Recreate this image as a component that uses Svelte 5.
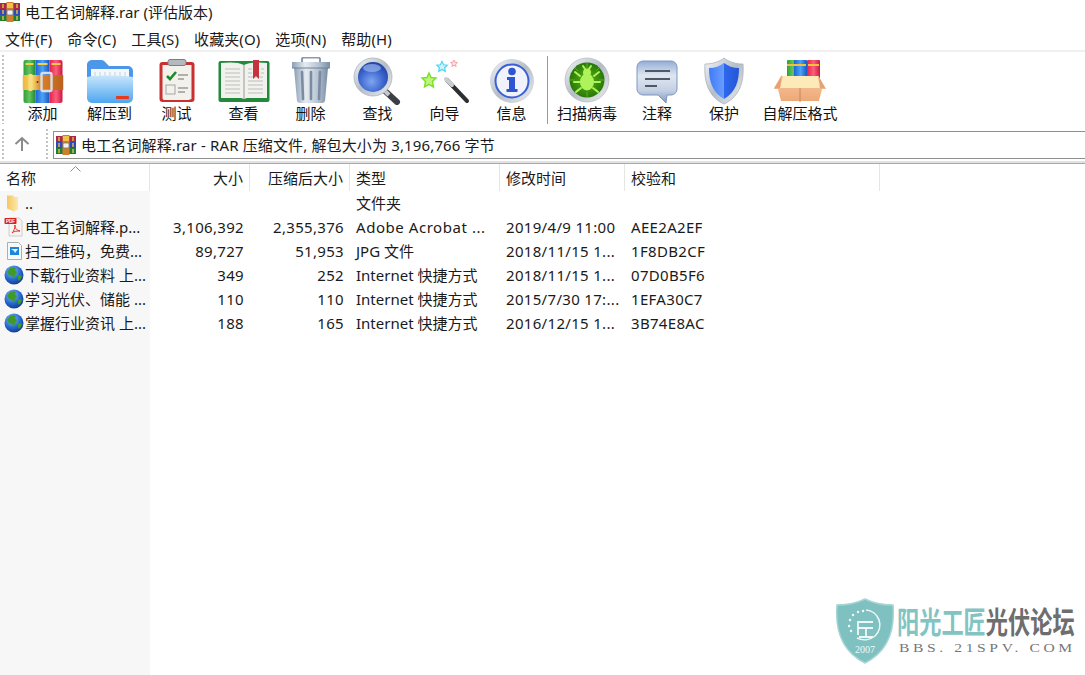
<script>
  const tools1 = [
    { label: '添加', w: 67, icon: 'rar' },
    { label: '解压到', w: 67, icon: 'folder' },
    { label: '测试', w: 67, icon: 'test' },
    { label: '查看', w: 67, icon: 'book' },
    { label: '删除', w: 67, icon: 'trash' },
    { label: '查找', w: 67, icon: 'find' },
    { label: '向导', w: 67, icon: 'wand' },
    { label: '信息', w: 67, icon: 'info' }
  ];
  const tools2 = [
    { label: '扫描病毒', w: 78, icon: 'bug' },
    { label: '注释', w: 62, icon: 'note' },
    { label: '保护', w: 72, icon: 'shield' },
    { label: '自解压格式', w: 80, icon: 'box' }
  ];
  const menus = ['文件(F)', '命令(C)', '工具(S)', '收藏夹(O)', '选项(N)', '帮助(H)'];
  const rows = [
    { icon: 'dir', name: '..', size: '', packed: '', type: '文件夹', time: '', crc: '' },
    { icon: 'pdf', name: '电工名词解释.p...', size: '3,106,392', packed: '2,355,376', type: 'Adobe Acrobat ...', wide: true, time: '2019/4/9 11:00', crc: 'AEE2A2EF' },
    { icon: 'jpg', name: '扫二维码，免费...', size: '89,727', packed: '51,953', type: 'JPG 文件', time: '2018/11/15 1...', crc: '1F8DB2CF' },
    { icon: 'web', name: '下载行业资料 上...', size: '349', packed: '252', type: 'Internet 快捷方式', time: '2018/11/15 1...', crc: '07D0B5F6' },
    { icon: 'web', name: '学习光伏、储能 ...', size: '110', packed: '110', type: 'Internet 快捷方式', time: '2015/7/30 17:...', crc: '1EFA30C7' },
    { icon: 'web', name: '掌握行业资讯 上...', size: '188', packed: '165', type: 'Internet 快捷方式', time: '2016/12/15 1...', crc: '3B74E8AC' }
  ];
</script>

<svg class="defs" width="0" height="0" aria-hidden="true">
  <defs>
    <linearGradient id="gGreen" x1="0" x2="1" y1="0" y2="0"><stop offset="0" stop-color="#2f9e3f"/><stop offset=".5" stop-color="#63c45a"/><stop offset="1" stop-color="#23873a"/></linearGradient>
    <linearGradient id="gBlue" x1="0" x2="1" y1="0" y2="0"><stop offset="0" stop-color="#1d63d6"/><stop offset=".5" stop-color="#4aa3f5"/><stop offset="1" stop-color="#1a55c4"/></linearGradient>
    <linearGradient id="gRed" x1="0" x2="1" y1="0" y2="0"><stop offset="0" stop-color="#e3204a"/><stop offset=".5" stop-color="#fb5f7c"/><stop offset="1" stop-color="#c91840"/></linearGradient>
    <linearGradient id="gBelt" x1="0" x2="1" y1="0" y2="0"><stop offset="0" stop-color="#e8b93c"/><stop offset=".25" stop-color="#f5d469"/><stop offset=".45" stop-color="#d9822b"/><stop offset="1" stop-color="#b9601c"/></linearGradient>
    <linearGradient id="gFolder" x1="0" x2="0" y1="0" y2="1"><stop offset="0" stop-color="#c9e6fb"/><stop offset="1" stop-color="#4da6ef"/></linearGradient>
    <linearGradient id="gMetal" x1="0" x2="1" y1="0" y2="0"><stop offset="0" stop-color="#8c9fb6"/><stop offset=".35" stop-color="#e6ebf1"/><stop offset=".7" stop-color="#b6c3d2"/><stop offset="1" stop-color="#7a8da4"/></linearGradient>
    <linearGradient id="gRing" x1="0" x2="1" y1="0" y2="1"><stop offset="0" stop-color="#f4f6f8"/><stop offset=".5" stop-color="#b4bcc6"/><stop offset="1" stop-color="#eef0f3"/></linearGradient>
    <radialGradient id="gLens" cx=".45" cy=".65" r=".7"><stop offset="0" stop-color="#7fa6f2"/><stop offset=".6" stop-color="#3a63cc"/><stop offset="1" stop-color="#1d3c9c"/></radialGradient>
    <radialGradient id="gBug" cx=".5" cy=".5" r=".55"><stop offset="0" stop-color="#5cb514"/><stop offset="1" stop-color="#237306"/></radialGradient>
    <linearGradient id="gNote" x1="0" x2="0" y1="0" y2="1"><stop offset="0" stop-color="#93add6"/><stop offset=".35" stop-color="#dfe6f0"/><stop offset=".7" stop-color="#c4d1e4"/><stop offset="1" stop-color="#7f99c0"/></linearGradient>
    <linearGradient id="gShield" x1="0" x2="1" y1="0" y2="0"><stop offset="0" stop-color="#3f7cfa"/><stop offset=".5" stop-color="#6a9dfd"/><stop offset=".5" stop-color="#2f68ee"/><stop offset="1" stop-color="#2356d6"/></linearGradient>
    <linearGradient id="gBox" x1="0" x2="0" y1="0" y2="1"><stop offset="0" stop-color="#f6c79b"/><stop offset="1" stop-color="#eea878"/></linearGradient>
    <radialGradient id="gGlobe" cx=".4" cy=".3" r=".8"><stop offset="0" stop-color="#8cc0f5"/><stop offset=".55" stop-color="#2469d0"/><stop offset="1" stop-color="#0d2f78"/></radialGradient>
    <linearGradient id="gDir" x1="0" x2="1" y1="0" y2="0"><stop offset="0" stop-color="#f3c85f"/><stop offset="1" stop-color="#fde9ad"/></linearGradient>

    <symbol id="rarIcon" viewBox="0 0 41 43">
      <path d="M1 2a2 2 0 0 1 2-2h10v43H3a2 2 0 0 1-2-2z" fill="url(#gGreen)"/>
      <rect x="13" y="0" width="14" height="43" fill="url(#gBlue)"/>
      <path d="M27 0h11a2 2 0 0 1 2 2v39a2 2 0 0 1-2 2H27z" fill="url(#gRed)"/>
      <rect x="3" y="3" width="8" height="2" fill="#f4d04a"/><rect x="15" y="3" width="10" height="2" fill="#f4d04a"/><rect x="29" y="3" width="9" height="2" fill="#f4c84a"/>
      <rect x="0" y="15" width="41" height="15" fill="url(#gBelt)"/>
      <rect x="6" y="14" width="4" height="17" rx="1" fill="#f7dd83"/>
      <rect x="19" y="13" width="10" height="18" rx="1.5" fill="none" stroke="#d9dde2" stroke-width="2.4"/>
      <circle cx="15" cy="22" r="1" fill="#5a3510"/>
    </symbol>

    <symbol id="rarSmall" viewBox="0 0 20 20">
      <rect x="0" y="1" width="20" height="6" fill="#a62a45"/>
      <rect x="0" y="7" width="20" height="6" fill="#3048b6"/>
      <rect x="0" y="13" width="20" height="6" fill="#1f7d38"/>
      <path d="M3 2v4M17 2v4M3 8v4M17 8v4M3 14v4M17 14v4" stroke="#e5c244" stroke-width="1.400"/>
      <rect x="6.500" y="0" width="7" height="20" fill="#d0802a"/>
      <rect x="7" y="1" width="6" height="5" fill="#f0c04a"/>
      <rect x="7" y="8" width="6" height="5" rx="1" fill="#f2f2f2" stroke="#777" stroke-width=".8"/>
    </symbol>

    <symbol id="globeIcon" viewBox="0 0 20 20">
      <circle cx="10" cy="10" r="9.500" fill="url(#gGlobe)"/>
      <path d="M6 3c2-1 5-1 6 0l-1 2 2 2-2 3-1 4-2-3-3-1-2-3zM14 11l3-1 1 2-3 4-1-2z" fill="#3f9a2c"/>
    </symbol>
  </defs>
</svg>

{#snippet icon(name)}
  <svg class="tool-icon" width="52" height="48" viewBox="0 0 52 48" aria-hidden="true">
    {#if name === 'rar'}
      <use href="#rarIcon" x="5.500" y="3" width="41" height="43"/>
    {:else if name === 'folder'}
      <path d="M3 9a5 5 0 0 1 5-6h9c3 0 4 2 6 4l2 2h19a5 5 0 0 1 5 5v8H3z" fill="#4c97ea"/>
      <path d="M7 12h38v18H7z" fill="#f3f8fd"/>
      <path d="M11 15v6M16 15v6M21 15v6M26 15v6M31 15v6M36 15v6M41 15v6" stroke="#c3d2e0" stroke-width="1"/>
      <path d="M3 20c8-2 36-2 46 0v21a5 5 0 0 1-5 5H8a5 5 0 0 1-5-5z" fill="url(#gFolder)"/>
      <rect x="32" y="39" width="13" height="3" rx=".8" fill="#e8391d"/>
    {:else if name === 'test'}
      <rect x="8.500" y="5" width="35" height="40" rx="3" fill="#c9302f"/>
      <path d="M11.500 8h29v34l-3 1H13a2 2 0 0 1-1.500-2z" fill="#f2f1ec"/>
      <rect x="17" y="2.500" width="18" height="6" rx="2" fill="#b5b8bd" stroke="#7c7f85"/>
      <path d="M16 19l3 3 6-7" fill="none" stroke="#1f8a2c" stroke-width="2.600"/>
      <path d="M27 18h10M27 22h6M27 31h10M27 35h7" stroke="#9a9a9a" stroke-width="1.500"/>
      <rect x="15" y="28" width="9" height="9" fill="none" stroke="#a5a5a5"/>
    {:else if name === 'book'}
      <rect x="0.500" y="4" width="51" height="41" rx="2" fill="#238a3b"/>
      <path d="M3 6c8-1 18-1 23 2 5-3 15-3 23-2v35H29l-3 1-3-1H3z" fill="#f1f1ee"/>
      <path d="M26 8v34" stroke="#b6b6b6" stroke-width="1.500"/>
      <path d="M7 12h15M7 16h15M7 20h15M7 24h15M7 28h15M7 32h15M7 36h15M30 20h15M30 24h15M30 28h15M30 32h15M30 36h15M30 12h4M30 16h4M43 12h3M43 16h3" stroke="#bdbdbd" stroke-width="1.200"/>
      <path d="M35 3h6v19l-3-3-3 3z" fill="#c5343c"/>
    {:else if name === 'trash'}
      <rect x="17" y="0.500" width="18" height="6" rx="2" fill="none" stroke="#8b9bae" stroke-width="2"/>
      <path d="M7 5h38v6H7z" fill="url(#gMetal)"/>
      <path d="M9 11h34l-3 33a3 3 0 0 1-3 2H15a3 3 0 0 1-3-2z" fill="url(#gMetal)"/>
      <path d="M17 15l1 27M26 15v27M35 15l-1 27" stroke="#7a8ca2" stroke-width="2.600" stroke-linecap="round"/>
      <path d="M7 11h38" stroke="#6e8096" stroke-width="1"/>
    {:else if name === 'find'}
      <path d="M32 33l13 12" stroke="#3c3f44" stroke-width="6" stroke-linecap="round"/>
      <path d="M33 34l4 4" stroke="#c5c9ce" stroke-width="4"/>
      <circle cx="21" cy="20" r="19" fill="url(#gRing)" stroke="#aab3bf" stroke-width=".8"/>
      <circle cx="21" cy="20" r="15" fill="url(#gLens)"/>
      <ellipse cx="20" cy="11" rx="9" ry="4" fill="#a9c1f2" opacity=".6"/>
    {:else if name === 'wand'}
      <path d="M28 23l20 21" stroke="#2d2f33" stroke-width="4" stroke-linecap="round"/>
      <path d="M27 22l6 6" stroke="#c9ccd0" stroke-width="4" stroke-linecap="round"/>
      <path d="M10 16l2 4.500 5 .5-3.600 3.400L14.500 30 10 27.400 5.500 30l1-5.600L3 21l5-.5z" fill="#bdf57f" stroke="#7ae024" stroke-width="1.400"/>
      <path d="M23 4.500l1.600 3.300 3.600.4-2.600 2.500.7 3.600L23 12.500l-3.300 1.800.7-3.600-2.600-2.500 3.600-.4z" fill="#c9f5ff" stroke="#4ed4f5" stroke-width="1.200"/>
      <path d="M35 3l1 2.200 2.400.3-1.800 1.600.5 2.400L35 8.300l-2.100 1.200.5-2.400-1.800-1.600 2.400-.3z" fill="#ffe0e2" stroke="#f9a0a8"/>
    {:else if name === 'info'}
      <circle cx="26" cy="24" r="21.500" fill="url(#gRing)" stroke="#c0c6ce" stroke-width=".6"/>
      <circle cx="26" cy="24" r="16.500" fill="#f0f3fb" stroke="#3a5fd6" stroke-width="2"/>
      <circle cx="26" cy="14.500" r="3.800" fill="#2e55d2"/>
      <path d="M21 20h8v12h2.500v3H20.500v-3H23v-9h-2z" fill="#2e55d2"/>
    {:else if name === 'bug'}
      <circle cx="26" cy="23" r="22" fill="url(#gRing)" stroke="#a8aeb6" stroke-width=".6"/>
      <circle cx="26" cy="23" r="17.500" fill="url(#gBug)"/>
      <path d="M26 6v5M26 35v5M9 23h5M38 23h5M14 11l3 3M38 11l-3 3M14 35l3-3M38 35l-3-3" stroke="#5fae22" stroke-width="1"/>
      <ellipse cx="26" cy="25" rx="7" ry="8.500" fill="#aef25c"/>
      <circle cx="26" cy="15.500" r="4" fill="#aef25c"/>
      <path d="M19 19l-5-4M33 19l5-4M19 25h-6M33 25h6M20 31l-5 4M32 31l5 4M24 12l-2-3M28 12l2-3" stroke="#aef25c" stroke-width="2" stroke-linecap="round"/>
    {:else if name === 'note'}
      <path d="M12 4h28a6 6 0 0 1 6 6v22a6 6 0 0 1-6 6h-4l-1 8-8-8H12a6 6 0 0 1-6-6V10a6 6 0 0 1 6-6z" fill="url(#gNote)" stroke="#7f98bf"/>
      <path d="M14 14h25M14 22h25M14 29h12" stroke="#4f5966" stroke-width="2"/>
    {:else if name === 'shield'}
      <path d="M26 1c5 4 12 6 19 6 1 16-2 32-19 40C9 39 6 23 7 7c7 0 14-2 19-6z" fill="url(#gRing)" stroke="#a7b1bd" stroke-width=".8"/>
      <path d="M26 6c4 3 9 5 15 5 0 13-3 24-15 31-12-7-15-18-15-31 6 0 11-2 15-5z" fill="url(#gShield)"/>
    {:else if name === 'box'}
      <rect x="13" y="3" width="12" height="18" rx="1" fill="url(#gGreen)"/>
      <rect x="20" y="3" width="13" height="18" rx="1" fill="url(#gBlue)"/>
      <rect x="33" y="3" width="13" height="18" rx="1" fill="url(#gRed)"/>
      <rect x="13" y="7" width="11" height="2" fill="#f2c03a"/><rect x="21" y="7" width="11" height="2" fill="#f2c03a"/><rect x="34" y="7" width="11" height="2" fill="#f2c03a"/>
      <path d="M7 19h38v9l6 3-3 1-3 12H7l-3-12-4-1 7-12z" fill="url(#gBox)"/>
      <path d="M9 19h35l2 12H6z" fill="#fdeab9"/>
      <path d="M6 31L0 32l8-14zM46 31l6 1-8-14z" fill="#e8a075"/>
      <path d="M26 31v14" stroke="#c88658" stroke-width="1"/>
    {/if}
  </svg>
{/snippet}

{#snippet fileIcon(kind)}
  {#if kind === 'dir'}
    <svg class="file-icon" width="20" height="20" viewBox="0 0 20 20" aria-hidden="true"><path d="M3 2.500h6l1.500 1.500h3.500v12.500l-4 2-7-3z" fill="url(#gDir)"/></svg>
  {:else if kind === 'pdf'}
    <svg class="file-icon" width="20" height="20" viewBox="0 0 20 20" aria-hidden="true"><path d="M5 1h10l3 3v15H5z" fill="#f6f4f2" stroke="#c9c6c3" stroke-width=".8"/><rect x="0.500" y="1" width="12" height="6" rx=".8" fill="#d9251d"/><text class="pdf-label" x="2" y="5.800">PDF</text><path d="M8 16c2-2 3-5 3-8 0 3 1 5 5 6-3 0-6 0-8 2z" fill="none" stroke="#e0352b"/></svg>
  {:else if kind === 'jpg'}
    <svg class="file-icon" width="20" height="20" viewBox="0 0 20 20" aria-hidden="true"><path d="M3.500 1.500h11l3 3V18.500h-14z" fill="#f7f8f9" stroke="#a9aeb4"/><rect x="6" y="6" width="9" height="8" fill="#1b86dc"/><path d="M7 8h7l-3 4-1-2z" fill="#eaf4fc"/></svg>
  {:else}
    <svg class="file-icon" width="20" height="20" viewBox="0 0 20 20" aria-hidden="true"><use href="#globeIcon" width="20" height="20"/></svg>
  {/if}
{/snippet}

{#snippet tool(t)}
  <div class="tool" style="width:{t.w}px">
    {@render icon(t.icon)}
    <span>{t.label}</span>
  </div>
{/snippet}

<div class="window">
  <header class="title">
    <svg class="title-icon" width="20" height="20" aria-hidden="true"><use href="#rarSmall" width="20" height="20"/></svg>
    <span>电工名词解释.rar (评估版本)</span>
  </header>

  <nav class="menu">
    {#each menus as m}<span>{m}</span>{/each}
  </nav>

  <div class="toolbar">
    <div class="grip"></div>
    <div class="tools">
      {#each tools1 as t}{@render tool(t)}{/each}
    </div>
    <div class="divider"></div>
    <div class="tools">
      {#each tools2 as t}{@render tool(t)}{/each}
    </div>
  </div>

  <div class="address-row">
    <div class="grip short"></div>
    <svg class="up" width="16" height="16" viewBox="0 0 16 16" aria-hidden="true"><path d="M8 15V2M1.500 8L8 2l6.500 6" fill="none" stroke="#8a8a8a" stroke-width="2"/></svg>
    <div class="grip short second"></div>
    <div class="address">
      <svg width="20" height="20" aria-hidden="true"><use href="#rarSmall" width="20" height="20"/></svg>
      <span>电工名词解释.rar - RAR 压缩文件, 解包大小为 3,196,766 字节</span>
    </div>
  </div>

  <div class="list">
    <div class="side"></div>
    <div class="head">
      <div class="hc first">名称<svg class="sort" width="11" height="6" viewBox="0 0 11 6" aria-hidden="true"><path d="M.5 5.500l5-5 5 5" fill="none" stroke="#8d8d8d"/></svg></div>
      <div class="hc num">大小</div>
      <div class="hc num">压缩后大小</div>
      <div class="hc">类型</div>
      <div class="hc">修改时间</div>
      <div class="hc">校验和</div>
    </div>
    {#each rows as r}
      <div class="row">
        <div class="c name">{@render fileIcon(r.icon)}<span>{r.name}</span></div>
        <div class="c num digits">{r.size}</div>
        <div class="c num digits">{r.packed}</div>
        <div class="c" class:wide={r.wide}>{r.type}</div>
        <div class="c digits">{r.time}</div>
        <div class="c digits">{r.crc}</div>
      </div>
    {/each}

    <div class="mark">
      <svg width="60" height="66" viewBox="0 0 60 66" aria-hidden="true">
        <path d="M30 1c8 4 18 6 28 6 2 24-4 46-28 58C6 53 0 31 2 7c10 0 20-2 28-6z" fill="#7fc1c0" stroke="#a8d6d5" stroke-width="1.500"/>
        <path d="M31 12a15 15 0 0 1 9 26c-5 4-12 5-18 2" fill="none" stroke="#eef8f8" stroke-width="1.600"/>
        <path d="M14 28l.1 0M15 22l.1 0M18 17l.1 0M23 14l.1 0M28 13l.1 0M16 33l.1 0" stroke="#eef8f8" stroke-width="2.400" stroke-linecap="round"/>
        <path d="M38 24H23v13M23 30h15M31 30v9M24 39h14" fill="none" stroke="#eef8f8" stroke-width="1.800"/>
        <text class="year" x="30" y="55">2007</text>
      </svg>
      <div class="mark-text">
        <div class="mark-cn"><span class="teal">阳光工匠</span><span class="grey">光伏论坛</span></div>
        <div class="mark-url">BBS. 21SPV. COM</div>
      </div>
    </div>
  </div>
</div>

<style>
  :global(body) {
    margin: 0;
    background: #fff;
  }
  .defs {
    position: absolute;
  }
  .window {
    width: 1085px;
    height: 675px;
    overflow: hidden;
    display: flex;
    flex-direction: column;
    font-family: "Noto Sans", "Noto Sans CJK SC", sans-serif;
    font-size: 15px;
    color: #1a1a1a;
    background: #fff;
  }
  .title {
    height: 26px;
    display: flex;
    align-items: center;
    gap: 5px;
  }
  .title-icon {
    margin-top: -2px;
  }
  .title span {
    margin-top: -3px;
  }
  .menu {
    height: 24px;
    display: flex;
    align-items: center;
    gap: 15px;
    letter-spacing: .1px;
    padding-left: 5px;
    border-bottom: 2px solid #f0f0f0;
  }
  .toolbar {
    height: 75px;
    display: flex;
    position: relative;
    padding-left: 9px;
  }
  .grip {
    position: absolute;
    left: 2px;
    top: 3px;
    bottom: 3px;
    width: 2px;
    background: repeating-linear-gradient(#c4c4c4 0 2px, transparent 2px 4px);
  }
  .tools {
    display: flex;
  }
  .tool {
    display: flex;
    flex-direction: column;
    align-items: center;
    padding-top: 5px;
    white-space: nowrap;
  }
  .tool span {
    line-height: 20px;
    margin-top: -2px;
    color: #111;
  }
  .tool-icon {
    display: block;
  }
  .divider {
    width: 1px;
    height: 68px;
    margin: 4px 0 0 2px;
    background: #9a9a9a;
  }
  .address-row {
    height: 36px;
    display: flex;
    align-items: center;
    position: relative;
    padding-left: 14px;
    border-bottom: 1px solid #a9a9a9;
    box-shadow: inset 0 -2px 0 #e2e2e2;
  }
  .grip.short {
    top: 2px;
    bottom: 4px;
  }
  .grip.second {
    left: 46px;
  }
  .up {
    flex: none;
    margin-top: -2px;
  }
  .address {
    position: absolute;
    left: 53px;
    right: -1px;
    top: 4px;
    height: 28px;
    box-sizing: border-box;
    border: 1px solid #8f8f8f;
    display: flex;
    align-items: center;
    gap: 5px;
    padding-left: 2px;
    letter-spacing: .14px;
  }
  .address span {
    margin-top: -2px;
  }
  .list {
    flex: 1;
    position: relative;
  }
  .side {
    position: absolute;
    left: 0;
    top: 27px;
    bottom: 0;
    width: 150px;
    background: #f7f7f7;
  }
  .head,
  .row {
    position: relative;
    display: grid;
    grid-template-columns: 150px 100px 100px 150px 125px 255px;
    justify-content: start;
  }
  .head {
    height: 27px;
  }
  .row {
    height: 24px;
  }
  .hc {
    position: relative;
    box-sizing: border-box;
    line-height: 28px;
    height: 27px;
    padding: 0 6px;
    border-right: 1px solid #e5e5e5;
    white-space: nowrap;
  }
  .sort {
    position: absolute;
    left: 70px;
    top: 2px;
  }
  .num {
    text-align: right;
  }
  .c {
    line-height: 25px;
    padding: 0 6px;
    white-space: nowrap;
    overflow: hidden;
  }
  .digits {
    letter-spacing: .32px;
  }
  .wide {
    letter-spacing: .55px;
  }
  .c.name {
    display: flex;
    align-items: center;
    gap: 1px;
    padding: 0 0 0 5px;
  }
  .file-icon {
    flex: none;
    margin-left: -1px;
  }
  .pdf-label {
    font-size: 4.500px;
    font-weight: 700;
    fill: #fff;
    font-family: "Liberation Sans", sans-serif;
  }
  .mark {
    position: absolute;
    left: 835px;
    top: 434px;
    display: flex;
    gap: 2px;
    align-items: flex-start;
  }
  .mark-text {
    margin-top: 5px;
    width: 180px;
  }
  .mark-cn {
    font-size: 30px;
    line-height: 38px;
    height: 38px;
    font-weight: 700;
    white-space: nowrap;
    transform: scaleX(.74);
    transform-origin: left center;
  }
  .teal {
    color: #83c4c3;
  }
  .grey {
    color: #6e6e6e;
  }
  .mark-url {
    font-family: "Liberation Serif", serif;
    font-size: 13px;
    line-height: 14px;
    letter-spacing: 3px;
    color: #777;
    white-space: nowrap;
    transform: scaleX(1.2);
    transform-origin: left center;
    margin-left: 2px;
  }
  .year {
    font-family: "Liberation Serif", serif;
    font-size: 10px;
    fill: #eef8f8;
    text-anchor: middle;
  }
</style>
